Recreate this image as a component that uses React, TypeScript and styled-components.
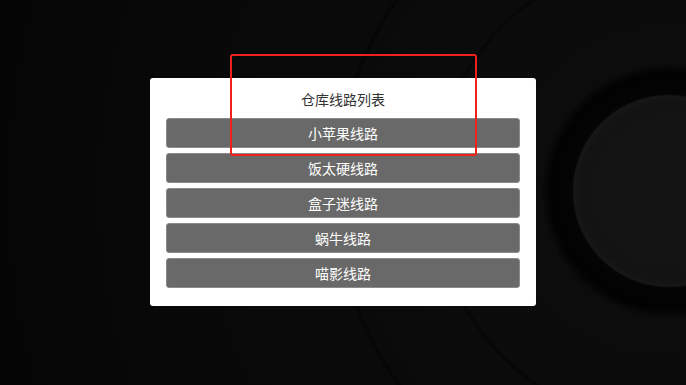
import React from 'react'
import styled, { createGlobalStyle } from 'styled-components'

const GlobalStyle = createGlobalStyle`
  html, body {
    margin: 0;
    padding: 0;
    height: 100%;
  }
  #root {
    height: 100%;
  }
`

// vinyl-record style backdrop, centred on the label at the right edge
const Screen = styled.div`
  position: relative;
  width: 100vw;
  height: 100vh;
  overflow: hidden;
  display: flex;
  align-items: center;
  justify-content: center;
  padding-bottom: 1px;
  box-sizing: border-box;
  font-family: 'Noto Sans CJK SC', 'Noto Sans', sans-serif;
  background:
    radial-gradient(circle at 669px 191px,
      #141414 0,
      #131313 90px,
      #171717 95px,
      #040404 97px,
      #020202 118px,
      #0c0c0c 128px,
      #0b0b0b 232px,
      #060606 234px,
      #0b0b0b 238px,
      #0a0a0a 330px,
      #050505 332px,
      #0a0a0a 336px,
      #080808 520px,
      #050505 700px);
`

const Card = styled.div`
  width: 386px;
  box-sizing: border-box;
  padding: 0 16px 18px;
  background: #fff;
  border-radius: 3px;
  display: flex;
  flex-direction: column;
  gap: 5px;
`

const Title = styled.div`
  height: 35px;
  line-height: 42px;
  text-align: center;
  font-size: 14px;
  color: #333;
`

const RouteButton = styled.button`
  height: 30px;
  box-sizing: border-box;
  border: 1px solid #8a8a8a;
  border-radius: 3px;
  background: #696969;
  color: #fff;
  font-family: inherit;
  font-size: 14px;
  padding: 0;
  cursor: pointer;
`

const Highlight = styled.div`
  position: absolute;
  left: 230px;
  top: 54px;
  width: 247px;
  height: 102px;
  box-sizing: border-box;
  border: 2px solid #f0201b;
  border-radius: 3px;
  pointer-events: none;
`

const routes = ['小苹果线路', '饭太硬线路', '盒子迷线路', '蜗牛线路', '喵影线路']

export default function App() {
  return (
    <Screen>
      <GlobalStyle />
      <Card>
        <Title>仓库线路列表</Title>
        {routes.map(name => (
          <RouteButton key={name}>{name}</RouteButton>
        ))}
      </Card>
      <Highlight />
    </Screen>
  )
}
